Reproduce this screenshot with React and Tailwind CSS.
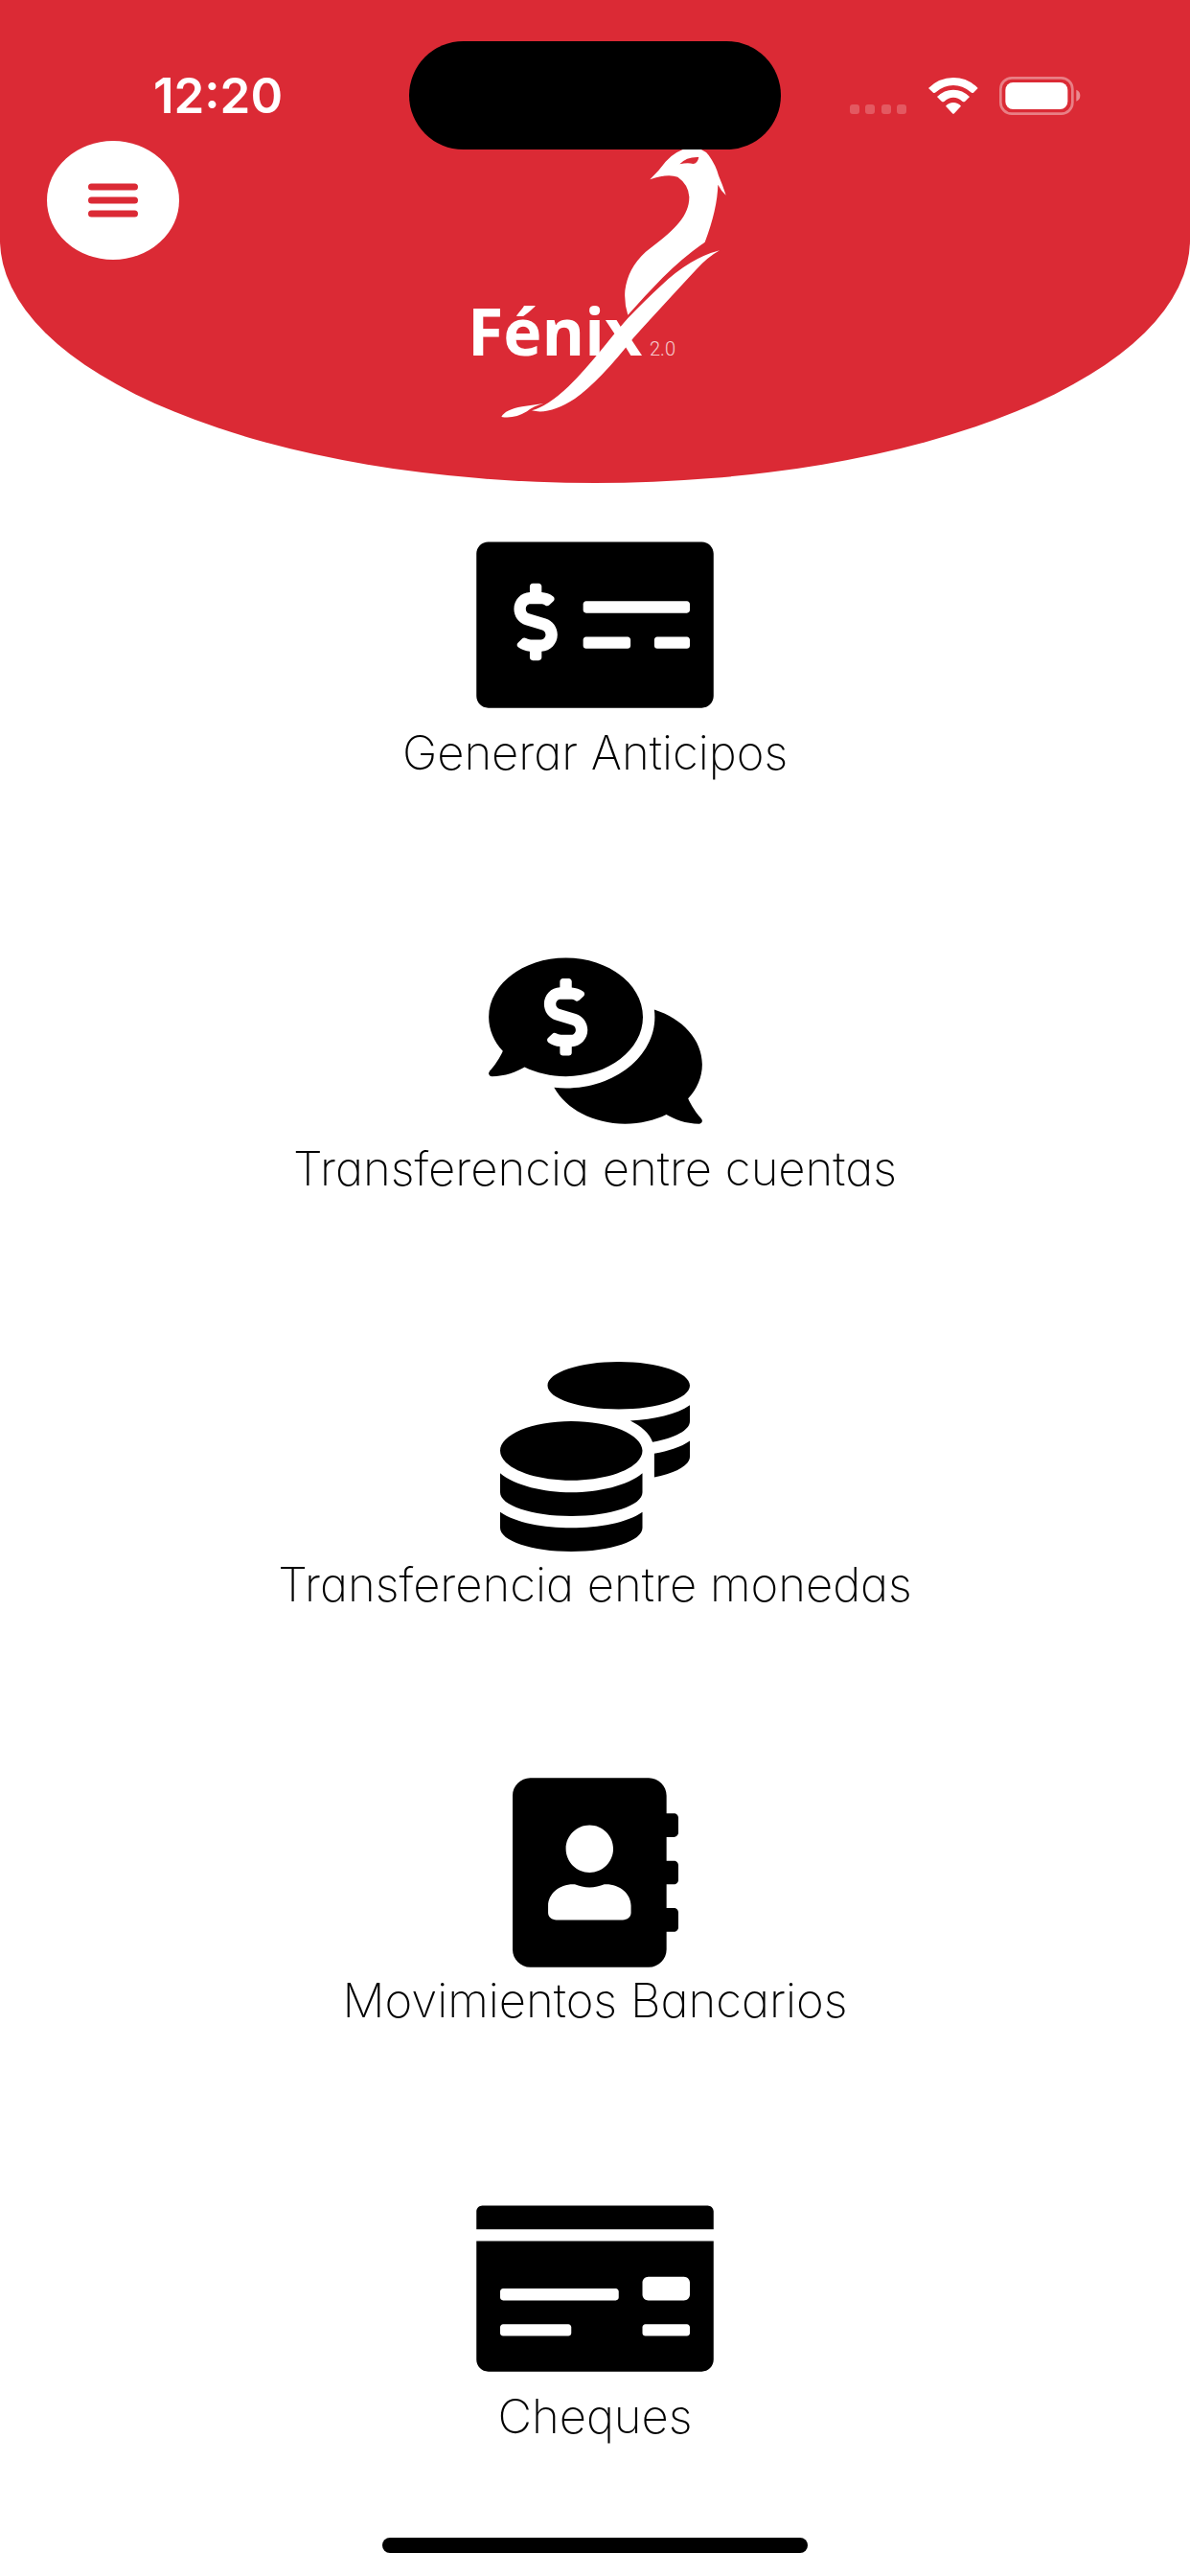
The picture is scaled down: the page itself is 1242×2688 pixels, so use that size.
import React from 'react';
import {
  FaAddressBook,
  FaCoins,
  FaCommentsDollar,
  FaMoneyCheck,
  FaMoneyCheckAlt,
} from 'react-icons/fa';

const OPTIONS = [
  { id: 'anticipos', label: 'Generar Anticipos', Icon: FaMoneyCheckAlt, size: 'w-[248px]' },
  { id: 'cuentas', label: 'Transferencia entre cuentas', Icon: FaCommentsDollar, size: 'w-[223px]' },
  { id: 'monedas', label: 'Transferencia entre monedas', Icon: FaCoins, size: 'w-[198px]' },
  { id: 'movimientos', label: 'Movimientos Bancarios', Icon: FaAddressBook, size: 'w-[173px]' },
  { id: 'cheques', label: 'Cheques', Icon: FaMoneyCheck, size: 'w-[248px]' },
];

export default function App() {
  return (
    <div className="flex min-h-screen flex-col bg-white font-[Inter,sans-serif] text-black">
      <header className="relative rounded-b-[50%_254px] bg-[#db2a35] pb-16">
        <StatusBar />
        <div className="grid grid-cols-[1fr_auto_1fr] items-start px-[49px]">
          <button
            type="button"
            aria-label="Menú"
            className="flex h-[124px] w-[138px] items-center justify-center rounded-[50%] bg-white text-[#db2a35]"
          >
            <MenuIcon />
          </button>
          <Logo />
        </div>
        {/* dynamic island, sits over the logo */}
        <div className="absolute top-[43px] left-1/2 h-[113px] w-[388px] -translate-x-1/2 rounded-full bg-black" />
      </header>

      <main className="pt-[49px]">
        <ul className="flex flex-col items-center gap-[166px]">
          {OPTIONS.map(({ id, label, Icon, size }) => (
            <li key={id}>
              <a href={`#${id}`} className="flex flex-col items-center">
                <Icon className={`h-[198px] ${size}`} aria-hidden="true" />
                <span className="text-[49px] leading-[70px] font-[250] [font-feature-settings:'cv11']">
                  {label}
                </span>
              </a>
            </li>
          ))}
        </ul>
      </main>

      <footer className="mt-auto flex justify-center pb-6">
        <div className="h-4 w-[444px] rounded-full bg-black" />
      </footer>
    </div>
  );
}

function StatusBar() {
  return (
    <div className="flex items-center justify-between pt-[72px] pr-[113px] pb-[19px] pl-[160px] text-white">
      <time className="text-[51px] leading-14 font-semibold">12:20</time>
      <div className="flex items-center gap-[22px]">
        <svg width="60" height="40" viewBox="0 0 60 40" fill="currentColor" opacity="0.22" aria-hidden="true">
          <rect x="0" y="29" width="10" height="10" rx="3" />
          <rect x="16" y="29" width="10" height="10" rx="3" />
          <rect x="33" y="29" width="10" height="10" rx="3" />
          <rect x="49" y="29" width="10" height="10" rx="3" />
        </svg>
        <svg width="52" height="40" viewBox="327 60 156 120" fill="currentColor" aria-hidden="true">
          <path d="M327 96Q360 63 405 63Q450 63 482 96L468 110Q463 112 459 108Q434 87 405 87Q376 87 351 108Q346 112 342 110Z" />
          <path d="M354 123Q376 101 405 101Q434 101 456 123L441 138Q437 140 433 137Q420 125 405 125Q390 125 377 137Q373 140 369 138Z" />
          <path d="M381 152Q391 141 405 141Q419 141 429 152L408 175Q405 178 402 175Z" />
        </svg>
        <svg width="86" height="40" viewBox="550 60 258 120" fill="currentColor" aria-hidden="true">
          <rect x="554" y="64" width="225" height="112" rx="35" fill="none" stroke="currentColor" strokeWidth="8" opacity="0.4" />
          <rect x="569" y="78" width="195" height="84" rx="24" />
          <path d="M791 101Q803 106 803 119Q803 132 791 137Z" opacity="0.45" />
        </svg>
      </div>
    </div>
  );
}

function MenuIcon() {
  return (
    <svg width="52" height="36" viewBox="0 0 52 36" stroke="currentColor" strokeWidth="7" strokeLinecap="round" aria-hidden="true">
      <path d="M3.5 4h45M3.5 18h45M3.5 32h45" />
    </svg>
  );
}

function Logo() {
  return (
    <svg width="280" height="293" viewBox="33 21 840 879" fill="#fff" role="img" aria-label="Fénix 2.0">
      {/* head and body */}
      <path
        fillRule="evenodd"
        d="M625 142Q652 116 674 86Q705 52 745 43Q790 40 809 66Q832 98 840 130Q852 158 863 191Q848 178 838 158Q836 235 797 338Q728 386 664 450Q610 505 556 566Q544 530 547 490Q555 420 612 368C690 308 749 262 748 196Q746 158 712 134Q680 122 625 142ZM718 94Q740 70 778 72Q774 92 760 93Q744 88 718 94Z"
      />
      {/* tail */}
      <path d="M843 364Q805 385 770 424Q690 510 573 638Q470 770 390 828Q310 880 255 865Q305 852 370 790C440 722 490 650 556 576Q610 520 660 474Q750 388 843 364Z" />
      <path d="M160 885Q172 862 225 853L292 843Q262 850 240 868Q200 892 160 885Z" />
      <text x="54" y="692" className="font-['Open_Sans'] text-[204px] font-bold">
        Fénix
      </text>
      <text x="624" y="694" className="font-[Roboto] text-[60px] font-light" opacity="0.75">
        2.0
      </text>
    </svg>
  );
}
